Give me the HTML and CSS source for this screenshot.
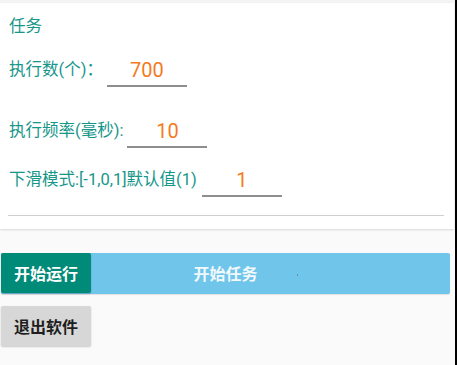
FILE: index.html
```html
<!DOCTYPE html>
<html lang="zh">
<head>
<meta charset="utf-8">
<link rel="stylesheet" href="styles.css">
</head>
<body>
<div class="app">
  <div class="topstrip"></div>
  <div class="card">
    <div class="title">任务</div>
    <div class="row row1">
      <span class="label">执行数(个)：</span>
      <div class="input">700</div>
    </div>
    <div class="row row2">
      <span class="label">执行频率(毫秒):</span>
      <div class="input">10</div>
    </div>
    <div class="row row3">
      <span class="label">下滑模式:[-1,0,1]默认值(1)</span>
      <div class="input">1</div>
    </div>
    <div class="divider"></div>
  </div>
  <div class="runbar">
    <div class="progress">开始任务<span class="dot"></span></div>
    <button class="btn btn-start">开始运行</button>
  </div>
  <button class="btn btn-exit">退出软件</button>
</div>
</body>
</html>
```
FILE: styles.css
```css
html, body {
  margin: 0;
  padding: 0;
  background: #000;
}
body {
  font-family: Roboto, "Noto Sans CJK SC", sans-serif;
}
.app {
  width: 455px;
  height: 365px;
  background: #fafafa;
  overflow: hidden;
}
.topstrip {
  height: 3px;
  background: #f3f3f3;
}
.card {
  width: 454px;
  background: #fff;
  box-shadow: 0 1px 2px rgba(0, 0, 0, 0.14);
  padding: 14px 0 13px 0;
  box-sizing: border-box;
}
.title {
  padding-left: 9px;
  font-size: 16.5px;
  line-height: 20px;
  height: 20px;
  color: #17968a;
}
.row {
  display: flex;
  align-items: flex-start;
  padding-left: 9px;
}
.row1 { margin-top: 18px; }
.row2 { margin-top: 29px; }
.row3 { margin-top: 17px; }
.label {
  font-size: 16.5px;
  line-height: 30px;
  color: #17968a;
  white-space: nowrap;
}
.row1 .label { margin-right: 4px; }
.row2 .label { margin-right: 4px; }
.row3 .label { margin-right: 5px; }
.input {
  width: 80px;
  height: 30px;
  line-height: 30px;
  text-align: center;
  font-size: 20px;
  color: #f57a1e;
  border-bottom: 2px solid #8e8e8e;
}
.divider {
  height: 1px;
  background: #cfcfcf;
  margin: 18px 10px 0 8px;
}
.runbar {
  position: relative;
  margin: 24px 0 0 1px;
  width: 449px;
  height: 41px;
}
.progress {
  height: 41px;
  background: #70c5ea;
  border-radius: 2px;
  box-shadow: 0 1px 1px rgba(0, 0, 0, 0.1);
  color: #f2f9fd;
  font-size: 16px;
  font-weight: bold;
  line-height: 41px;
  text-align: center;
  font-family: "Noto Sans CJK SC", sans-serif;
  position: relative;
}
.dot {
  position: absolute;
  left: 296px;
  top: 21px;
  width: 1px;
  height: 2px;
  background: #7a8a99;
}
.btn {
  border: none;
  border-radius: 2px;
  font-family: "Noto Sans CJK SC", sans-serif;
  font-size: 16px;
  font-weight: bold;
  width: 90px;
  height: 40px;
  padding: 0;
  box-shadow: 0 1px 2px rgba(0, 0, 0, 0.2);
}
.btn-start {
  position: absolute;
  left: 0;
  top: 0;
  background: #008a78;
  color: #fff;
}
.btn-exit {
  display: block;
  margin: 12px 0 0 1px;
  background: #d7d7d7;
  color: #1e1e1e;
}
```
